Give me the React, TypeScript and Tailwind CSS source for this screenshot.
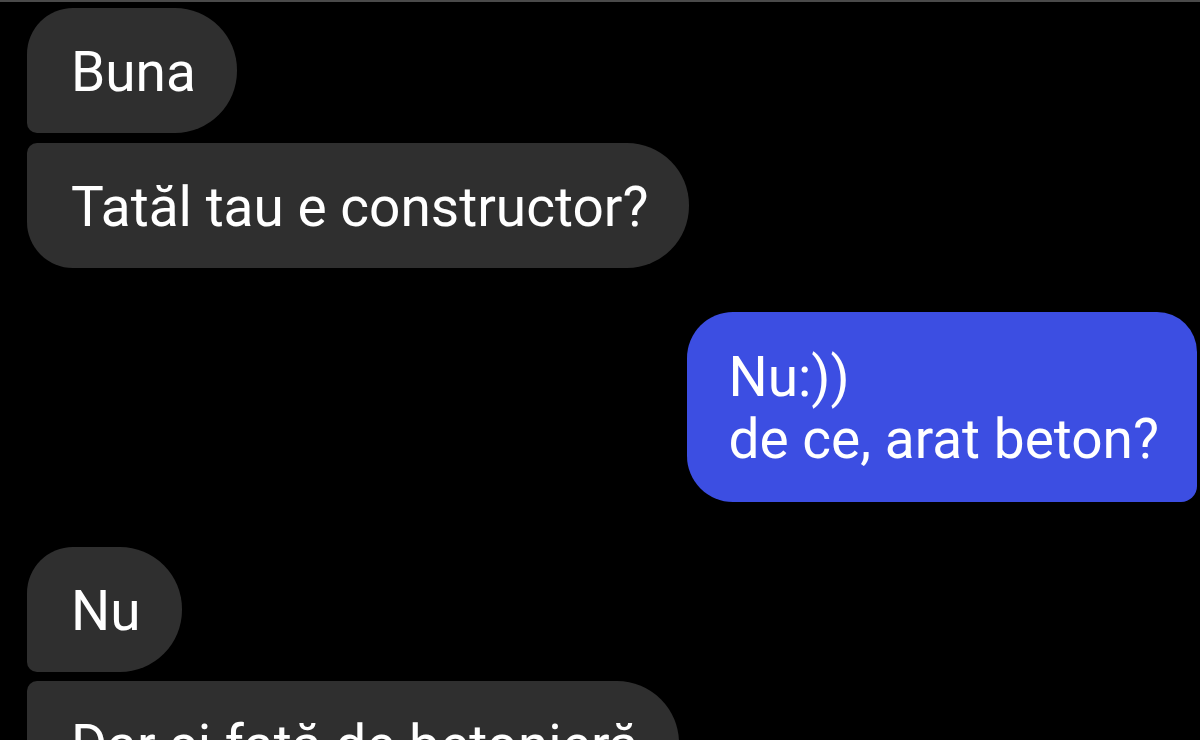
import React from "react";

type Msg = {
  text: string[];
  mine?: boolean;
  shape: string;
  gap: string;
};

const messages: Msg[] = [
  { text: ["Buna"], shape: "rounded-tl-[46px] rounded-bl-[10px] rounded-r-[62px]", gap: "mt-0" },
  { text: ["Tatăl tau e constructor?"], shape: "rounded-tl-[10px] rounded-bl-[46px] rounded-r-[62px]", gap: "mt-[10px]" },
  {
    text: ["Nu:))", "de ce, arat beton?"],
    mine: true,
    shape: "rounded-l-[46px] rounded-tr-[40px] rounded-br-[16px]",
    gap: "mt-[44px]",
  },
  { text: ["Nu"], shape: "rounded-tl-[46px] rounded-bl-[10px] rounded-r-[62px]", gap: "mt-[45px]" },
  { text: ["Dar și față de betonieră"], shape: "rounded-tl-[10px] rounded-bl-[46px] rounded-r-[62px]", gap: "mt-[9px]" },
];

export default function App() {
  return (
    <div className="w-[1200px] h-[740px] overflow-hidden bg-black border-t-2 border-[#4a4a4a]">
      <div
        className="flex flex-col pl-[27px] pr-[3px] pt-[6px] text-white"
        style={{ fontFamily: "Roboto, 'Noto Sans', sans-serif" }}
      >
        {messages.map((m, i) => (
          <div key={i} className={`flex ${m.mine ? "justify-end" : "justify-start"} ${m.gap}`}>
            <div
              className={`${m.shape} ${
                m.mine ? "bg-[#3c4ee2] pl-[41px] pr-[38px] pt-[34px] pb-[32px]" : "bg-[#2f2f2f] pl-[44px] pr-[41px] pt-[33px] pb-[30px]"
              } text-[55px] leading-[62px] whitespace-nowrap`}
            >
              {m.text.map((line, j) => (
                <div key={j}>{line}</div>
              ))}
            </div>
          </div>
        ))}
      </div>
    </div>
  );
}
